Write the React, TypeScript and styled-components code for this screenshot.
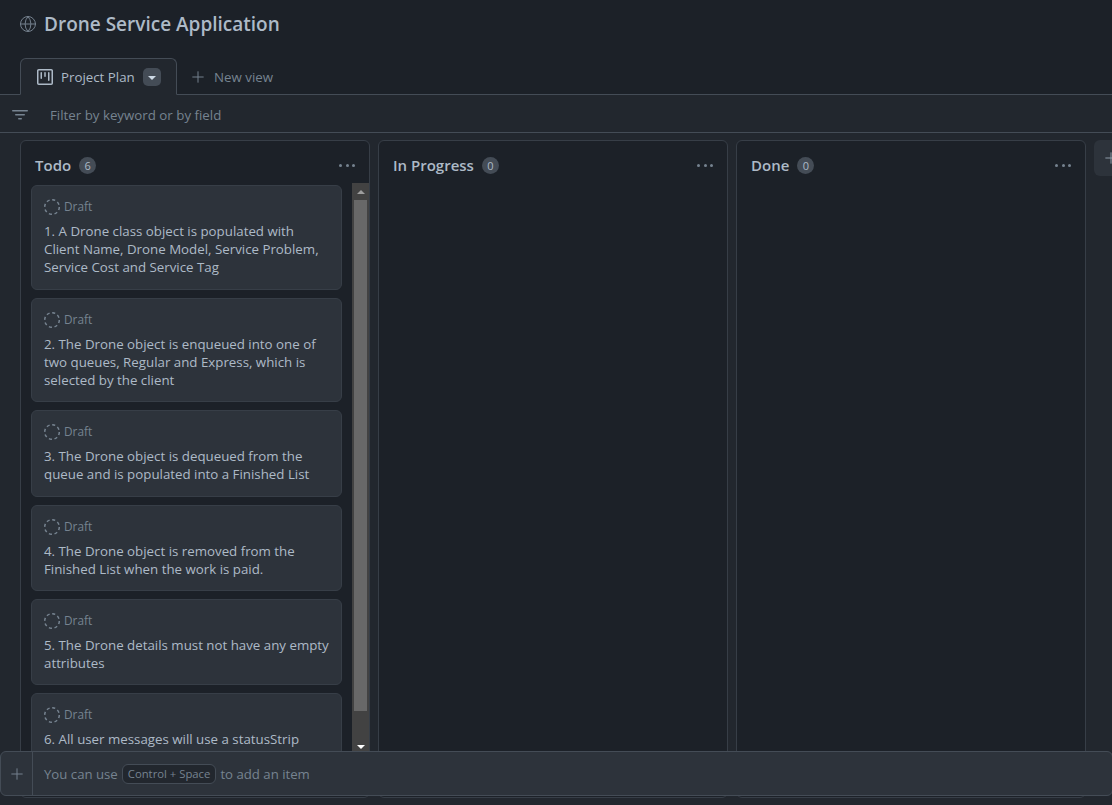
import React from "react";
import styled, { createGlobalStyle } from "styled-components";
import { Globe, Plus } from "lucide-react";

const Global = createGlobalStyle`
  html, body { margin: 0; padding: 0; height: 100%; background: #1c2128; overflow: hidden; }
  #root { height: 100%; }
  * { box-sizing: border-box; }
`;

const Page = styled.div`
  position: relative;
  width: 1112px;
  height: 805px;
  overflow: hidden;
  display: flex;
  flex-direction: column;
  background: #1c2128;
  color: #adbac7;
  font-family: "Open Sans", "Noto Sans", "Liberation Sans", sans-serif;
`;

const TitleRow = styled.header`
  height: 58px;
  padding: 0 20px 11px 19px;
  display: flex;
  align-items: center;
  gap: 7px;
  flex: none;
`;

const Title = styled.h1`
  margin: 0;
  font-size: 19px;
  line-height: 26px;
  font-weight: 600;
  color: #adbac7;
`;

const TabRow = styled.nav`
  height: 37px;
  flex: none;
  padding-left: 20px;
  display: flex;
  align-items: flex-end;
  border-bottom: 1px solid #444c56;
`;

const ActiveTab = styled.div`
  height: 37px;
  width: 157px;
  margin-bottom: -1px;
  padding: 0 0 0 16px;
  display: flex;
  align-items: center;
  gap: 8px;
  background: #22272e;
  border: 1px solid #444c56;
  border-bottom: 1px solid #22272e;
  border-radius: 6px 6px 0 0;
  font-size: 13.3px;
  color: #adbac7;
`;

const Caret = styled.span`
  width: 18px;
  height: 18px;
  border-radius: 5px;
  background: #444c56;
  display: flex;
  align-items: center;
  justify-content: center;
  &::after {
    content: "";
    margin-top: 2px;
    border-left: 4px solid transparent;
    border-right: 4px solid transparent;
    border-top: 4px solid #cdd9e5;
  }
`;

const NewView = styled.div`
  height: 34px;
  margin-left: 12px;
  display: flex;
  align-items: center;
  gap: 7px;
  font-size: 13.3px;
  color: #768390;
`;

const FilterBar = styled.div`
  height: 38px;
  flex: none;
  padding: 2px 0 0 12px;
  display: flex;
  align-items: center;
  gap: 22px;
  background: #22272e;
  border-bottom: 1px solid #444c56;
  font-size: 13.3px;
  color: #768390;
`;

const Board = styled.main`
  flex: 1;
  min-height: 0;
  padding: 7px 0 0 20px;
  display: flex;
  align-items: flex-start;
  gap: 8px;
  background: #22272e;
  overflow: hidden;
`;

const Column = styled.section`
  width: 350px;
  height: 658px;
  flex: none;
  background: #1c2128;
  border: 1px solid #373e47;
  border-radius: 6px;
  display: flex;
  flex-direction: column;
`;

const ColumnHead = styled.div`
  height: 42px;
  flex: none;
  padding: 6px 14px 0 14px;
  display: flex;
  align-items: center;
  gap: 8px;
`;

const ColumnName = styled.h2`
  margin: 0;
  font-size: 15px;
  font-weight: 600;
  color: #adbac7;
`;

const Count = styled.span`
  width: 17px;
  height: 17px;
  border-radius: 50%;
  background: #444c56;
  color: #adbac7;
  font-size: 11px;
  display: flex;
  align-items: center;
  justify-content: center;
`;

const More = styled.span`
  margin-left: auto;
  display: flex;
  gap: 3.5px;
  i {
    width: 3px;
    height: 3px;
    border-radius: 50%;
    background: #768390;
  }
`;

const ColumnBody = styled.div`
  height: 569px;
  padding-left: 10px;
  display: flex;
  justify-content: space-between;
  overflow: hidden;
`;

const CardList = styled.div`
  width: 311px;
  padding-top: 2.4px;
  display: flex;
  flex-direction: column;
  gap: 8px;
`;

const Card = styled.article`
  flex: none;
  padding: 11px 12px 12.4px;
  background: #2d333b;
  border: 1px solid #373e47;
  border-radius: 6px;
`;

const Meta = styled.div`
  height: 19px;
  padding-top: 1px;
  display: flex;
  align-items: center;
  gap: 4px;
  font-size: 11.8px;
  color: #768390;
`;

const MetaLabel = styled.span`
  margin-top: -2px;
`;

const CardText = styled.p`
  margin: 6px 0 0;
  font-size: 13.3px;
  line-height: 18px;
  white-space: nowrap;
  color: #adbac7;
`;

const ScrollTrack = styled.div`
  width: 17px;
  flex: none;
  background: #424242;
  display: flex;
  flex-direction: column;
  align-items: center;
`;

const ScrollArrow = styled.span<{ $down?: boolean }>`
  width: 17px;
  height: 17px;
  flex: none;
  display: flex;
  align-items: center;
  justify-content: center;
  &::after {
    content: "";
    border-left: 4px solid transparent;
    border-right: 4px solid transparent;
    ${(p) =>
      p.$down
        ? "border-top: 4px solid #ffffff; margin-top: 6px;"
        : "border-bottom: 4px solid #9e9e9e;"}
  }
`;

const ScrollThumb = styled.span`
  width: 13px;
  height: 511px;
  background: #686868;
  flex: none;
`;

const ScrollRest = styled.span`
  flex: 1;
`;

const AddColumn = styled.div`
  width: 40px;
  height: 36px;
  flex: none;
  background: #2d333b;
  border-radius: 6px;
  display: flex;
  align-items: center;
  padding-left: 8px;
  color: #909dab;
`;

const Omnibar = styled.div`
  position: absolute;
  left: 0;
  top: 751px;
  width: 1113px;
  height: 45px;
  display: flex;
  align-items: center;
  background: #2d333b;
  border: 1px solid #444c56;
  border-radius: 6px;
  font-size: 13.2px;
  color: #768390;
`;

const OmniAdd = styled.div`
  width: 32px;
  height: 100%;
  flex: none;
  border-right: 1px solid #444c56;
  display: flex;
  align-items: center;
  justify-content: center;
  color: #768390;
`;

const OmniText = styled.div`
  padding-left: 11px;
  display: flex;
  align-items: center;
  gap: 4px;
`;

const Kbd = styled.kbd`
  height: 20px;
  padding: 0 5px;
  display: flex;
  align-items: center;
  border: 1px solid #444c56;
  border-radius: 6px;
  background: #22272e;
  color: #768390;
  font-family: inherit;
  font-size: 11.3px;
`;

const DraftIcon = () => (
  <svg width="16" height="16" viewBox="0 0 16 16" fill="none">
    <circle cx="8" cy="8" r="7.3" stroke="#768390" strokeWidth="1.5" strokeDasharray="3.1 2.63" />
  </svg>
);

const BoardIcon = () => (
  <svg width="16" height="16" viewBox="0 0 16 16" fill="#adbac7">
    <path d="M0 1.75C0 .784.784 0 1.75 0h12.5C15.216 0 16 .784 16 1.75v12.5A1.75 1.75 0 0 1 14.25 16H1.75A1.75 1.75 0 0 1 0 14.25ZM1.75 1.5a.25.25 0 0 0-.25.25v12.5c0 .138.112.25.25.25h12.5a.25.25 0 0 0 .25-.25V1.75a.25.25 0 0 0-.25-.25ZM11.75 3a.75.75 0 0 1 .75.75v7.5a.75.75 0 0 1-1.5 0v-7.5a.75.75 0 0 1 .75-.75Zm-8.25.75a.75.75 0 0 1 1.5 0v5.5a.75.75 0 0 1-1.5 0ZM8 3a.75.75 0 0 1 .75.75v3.5a.75.75 0 0 1-1.5 0v-3.5A.75.75 0 0 1 8 3Z" />
  </svg>
);

const FilterIcon = () => (
  <svg width="16" height="16" viewBox="0 0 16 16" fill="#768390">
    <path d="M.75 3h14.5a.75.75 0 0 1 0 1.5H.75a.75.75 0 0 1 0-1.5ZM3 7.75A.75.75 0 0 1 3.75 7h8.5a.75.75 0 0 1 0 1.5h-8.5A.75.75 0 0 1 3 7.75Zm3 4a.75.75 0 0 1 .75-.75h2.5a.75.75 0 0 1 0 1.5h-2.5a.75.75 0 0 1-.75-.75Z" />
  </svg>
);

const cards = [
  ["1. A Drone class object is populated with", "Client Name, Drone Model, Service Problem,", "Service Cost and Service Tag"],
  ["2. The Drone object is enqueued into one of", "two queues, Regular and Express, which is", "selected by the client"],
  ["3. The Drone object is dequeued from the", "queue and is populated into a Finished List"],
  ["4. The Drone object is removed from the", "Finished List when the work is paid."],
  ["5. The Drone details must not have any empty", "attributes"],
  ["6. All user messages will use a statusStrip", "control"],
];

const MoreDots = () => (
  <More>
    <i />
    <i />
    <i />
  </More>
);

export default function App() {
  return (
    <Page>
      <Global />
      <TitleRow>
        <Globe size={18} strokeWidth={1.3} color="#768390" />
        <Title>Drone Service Application</Title>
      </TitleRow>
      <TabRow>
        <ActiveTab>
          <BoardIcon />
          <span>Project Plan</span>
          <Caret />
        </ActiveTab>
        <NewView>
          <Plus size={18} strokeWidth={1.3} />
          <span>New view</span>
        </NewView>
      </TabRow>
      <FilterBar>
        <FilterIcon />
        <span>Filter by keyword or by field</span>
      </FilterBar>
      <Board>
        <Column>
          <ColumnHead>
            <ColumnName>Todo</ColumnName>
            <Count>6</Count>
            <MoreDots />
          </ColumnHead>
          <ColumnBody>
            <CardList>
              {cards.map((lines) => (
                <Card key={lines[0]}>
                  <Meta>
                    <DraftIcon />
                    <MetaLabel>Draft</MetaLabel>
                  </Meta>
                  <CardText>
                    {lines.map((l) => (
                      <React.Fragment key={l}>
                        {l}
                        <br />
                      </React.Fragment>
                    ))}
                  </CardText>
                </Card>
              ))}
            </CardList>
            <ScrollTrack>
              <ScrollArrow />
              <ScrollThumb />
              <ScrollRest />
              <ScrollArrow $down />
            </ScrollTrack>
          </ColumnBody>
        </Column>
        <Column>
          <ColumnHead>
            <ColumnName>In Progress</ColumnName>
            <Count>0</Count>
            <MoreDots />
          </ColumnHead>
        </Column>
        <Column>
          <ColumnHead>
            <ColumnName>Done</ColumnName>
            <Count>0</Count>
            <MoreDots />
          </ColumnHead>
        </Column>
        <AddColumn>
          <Plus size={18} strokeWidth={1.3} />
        </AddColumn>
      </Board>
      <Omnibar>
        <OmniAdd>
          <Plus size={18} strokeWidth={1.3} />
        </OmniAdd>
        <OmniText>
          <span>You can use</span>
          <Kbd>Control + Space</Kbd>
          <span>to add an item</span>
        </OmniText>
      </Omnibar>
    </Page>
  );
}
